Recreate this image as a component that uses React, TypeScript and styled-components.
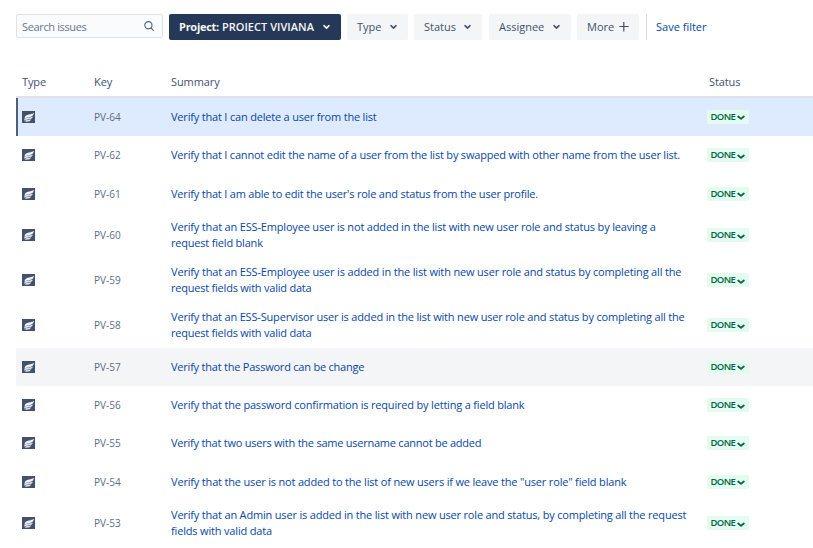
import React from "react";
import styled, { createGlobalStyle } from "styled-components";

const GlobalStyle = createGlobalStyle`
  * { box-sizing: border-box; }
  body {
    margin: 0;
    background: #ffffff;
    color: #42526e;
    font-family: "Open Sans", "Noto Sans", sans-serif;
    font-size: 11px;
    line-height: 16px;
    overflow: hidden;
  }
`;

const Page = styled.main`
  width: 813px;
  height: 548px;
  padding: 14px 0 0 16px;
  overflow: hidden;
`;

const Toolbar = styled.div`
  display: flex;
  align-items: flex-start;
  height: 54px;
`;

const SearchBox = styled.label`
  display: flex;
  align-items: center;
  justify-content: space-between;
  width: 147px;
  height: 24px;
  margin-right: 6px;
  padding: 0 7px 0 5px;
  border: 1px solid #dfe1e6;
  border-radius: 2px;
  background: #fafbfc;
  color: #6b778c;
`;

const SearchText = styled.span`
  padding-top: 1px;
  letter-spacing: -0.36px;
`;

const FilterButton = styled.button<{ $width: number; $gap: number; $active?: boolean }>`
  display: flex;
  align-items: center;
  justify-content: space-between;
  width: ${(p) => p.$width}px;
  height: 26px;
  margin: 0 ${(p) => p.$gap}px 0 0;
  padding: 0 10px;
  border: 0;
  border-radius: 2px;
  background: ${(p) => (p.$active ? "#253858" : "#f4f5f7")};
  color: ${(p) => (p.$active ? "#f4f5f7" : "#42526e")};
  font: 500 11px/16px "Open Sans", "Noto Sans", sans-serif;
  white-space: nowrap;
`;

const ProjectLabel = styled.span`
  font-weight: 600;
  letter-spacing: 0.04px;

  b {
    font-weight: 700;
    letter-spacing: -0.27px;
  }
`;

const SaveFilter = styled.a`
  display: flex;
  align-items: center;
  height: 26px;
  padding-left: 9px;
  border-left: 1px solid #d8dbe1;
  color: #0747a6;
  font-weight: 500;
`;

const Table = styled.div`
  width: 797px;
`;

const columns = "72px 77px 538px 1fr";

const HeaderRow = styled.div`
  display: grid;
  grid-template-columns: ${columns};
  align-items: center;
  height: 29.8px;
  padding-left: 6px;
  border-bottom: 2px solid #dfe1e6;
  font-weight: 500;
`;

const HeaderCell = styled.span`
  letter-spacing: -0.1px;
`;

const IssueRow = styled.div<{ $state?: "selected" | "hover"; $lines: number }>`
  display: grid;
  grid-template-columns: ${columns};
  align-items: center;
  height: ${(p) => (p.$lines > 1 ? 44.9 : 38.36)}px;
  padding-left: ${(p) => (p.$state === "selected" ? 4 : 6)}px;
  border-left: ${(p) => (p.$state === "selected" ? "2px solid #505f79" : "0")};
  background: ${(p) =>
    p.$state === "selected" ? "#deebff" : p.$state === "hover" ? "#f4f5f7" : "#ffffff"};
`;

const Key = styled.span`
  color: #5e6c84;
  font-size: 10px;
  font-weight: 500;
  letter-spacing: 0.04px;
`;

const Summary = styled.a`
  display: flex;
  flex-direction: column;
  color: #0747a6;
`;

const SummaryLine = styled.span<{ $tracking: number }>`
  letter-spacing: ${(p) => p.$tracking}px;
  white-space: nowrap;
`;

const StatusBadge = styled.span`
  display: flex;
  align-items: center;
  justify-content: space-between;
  width: 42px;
  height: 14px;
  margin-left: -2px;
  padding: 0 4px 0 3.5px;
  border-radius: 2px;
  background: #e3fcef;
  color: #006644;
  font-size: 9.5px;
  font-weight: 650;
  line-height: 14px;
  letter-spacing: -0.6px;
`;

const BadgeChevron = styled.svg`
  margin-top: 3px;
`;

const Chevron = () => (
  <svg width="9" height="8" viewBox="0 0 9 8" fill="none">
    <path d="M2 2.7 4.5 5.1 7 2.7" stroke="currentColor" strokeWidth="1.6" strokeLinecap="round" strokeLinejoin="round" />
  </svg>
);

const SearchIcon = () => (
  <svg width="12" height="12" viewBox="0 0 12 12" fill="none" stroke="#505f79" strokeWidth="1.1">
    <circle cx="5.4" cy="5.2" r="3.6" />
    <path d="m8 7.9 2.3 2.4" strokeLinecap="round" />
  </svg>
);

const PlusIcon = () => (
  <svg width="10" height="10" viewBox="0 0 10 10" stroke="currentColor" strokeWidth="1.2">
    <path d="M0.3 4.5h9.4M4.8 0v9.6" />
  </svg>
);

const TestIcon = () => (
  <svg width="13" height="12" viewBox="0 0 13 12">
    <path fill="#42526e" d="M0 0h13v12H0z" />
    <path fill="#f4f5f7" d="M12 1.8C11.6 4.9 9.5 5.8 6.5 6.2 4.6 6.5 3.4 6.8 2.4 7.7 2.6 4.9 4.4 3.9 7 3.5 9.2 3.2 10.8 2.8 12 1.8Z" />
    <path fill="#dfe3ea" d="M10.9 5.4C10.4 7.7 8.6 8.3 6 8.5 4.2 8.7 3 9 2 9.8 2.3 7.6 3.6 6.9 5.9 6.6 7.8 6.4 9.5 6.3 10.9 5.4Z" />
    <path fill="#dfe3ea" d="M9.2 8.2C8.7 10.2 6.6 10.8 2.6 10.6 3.2 9.4 4.3 9.1 5.8 9 7.2 8.9 8.3 8.8 9.2 8.2Z" />
  </svg>
);

type Line = [text: string, tracking: number];
interface Issue {
  id: number;
  state?: "selected" | "hover";
  lines: Line[];
}

const issues: Issue[] = [
  { id: 64, state: "selected", lines: [["Verify that I can delete a user from the list", -0.19]] },
  { id: 62, lines: [["Verify that I cannot edit the name of a user from the list by swapped with other name from the user list.", -0.195]] },
  { id: 61, lines: [["Verify that I am able to edit the user's role and status from the user profile.", -0.2]] },
  { id: 60, lines: [["Verify that an ESS-Employee user is not added in the list with new user role and status by leaving a", -0.173], ["request field blank", -0.2]] },
  { id: 59, lines: [["Verify that an ESS-Employee user is added in the list with new user role and status by completing all the", -0.17], ["request fields with valid data", -0.22]] },
  { id: 58, lines: [["Verify that an ESS-Supervisor user is added in the list with new user role and status by completing all the", -0.178], ["request fields with valid data", -0.22]] },
  { id: 57, state: "hover", lines: [["Verify that the Password can be change", -0.22]] },
  { id: 56, lines: [["Verify that the password confirmation is required by letting a field blank", -0.185]] },
  { id: 55, lines: [["Verify that two users with the same username cannot be added", -0.24]] },
  { id: 54, lines: [["Verify that the user is not added to the list of new users if we leave the \"user role\" field blank", -0.177]] },
  { id: 53, lines: [["Verify that an Admin user is added in the list with new user role and status, by completing all the request", -0.182], ["fields with valid data", -0.17]] },
];

export default function App() {
  return (
    <>
      <GlobalStyle />
      <Page>
        <Toolbar>
          <SearchBox>
            <SearchText>Search issues</SearchText>
            <SearchIcon />
          </SearchBox>
          <FilterButton $width={172} $gap={6} $active>
            <ProjectLabel><b>Project:</b> PROIECT VIVIANA</ProjectLabel>
            <Chevron />
          </FilterButton>
          <FilterButton $width={61} $gap={6}>Type<Chevron /></FilterButton>
          <FilterButton $width={68} $gap={7}>Status<Chevron /></FilterButton>
          <FilterButton $width={82} $gap={6}>Assignee<Chevron /></FilterButton>
          <FilterButton $width={62} $gap={7}>More<PlusIcon /></FilterButton>
          <SaveFilter>Save filter</SaveFilter>
        </Toolbar>
        <Table>
          <HeaderRow>
            <HeaderCell>Type</HeaderCell>
            <HeaderCell>Key</HeaderCell>
            <HeaderCell>Summary</HeaderCell>
            <HeaderCell>Status</HeaderCell>
          </HeaderRow>
          {issues.map((issue) => (
            <IssueRow key={issue.id} $lines={issue.lines.length} $state={issue.state}>
              <TestIcon />
              <Key>PV-{issue.id}</Key>
              <Summary>
                {issue.lines.map(([text, tracking]) => (
                  <SummaryLine key={text} $tracking={tracking}>{text}</SummaryLine>
                ))}
              </Summary>
              <StatusBadge>
                DONE
                <BadgeChevron width="8" height="6" viewBox="0 0 8 6" fill="none">
                  <path d="M1.2 1.5 4 3.9 6.8 1.5" stroke="currentColor" strokeWidth="1.8" strokeLinecap="round" strokeLinejoin="round" />
                </BadgeChevron>
              </StatusBadge>
            </IssueRow>
          ))}
        </Table>
      </Page>
    </>
  );
}
